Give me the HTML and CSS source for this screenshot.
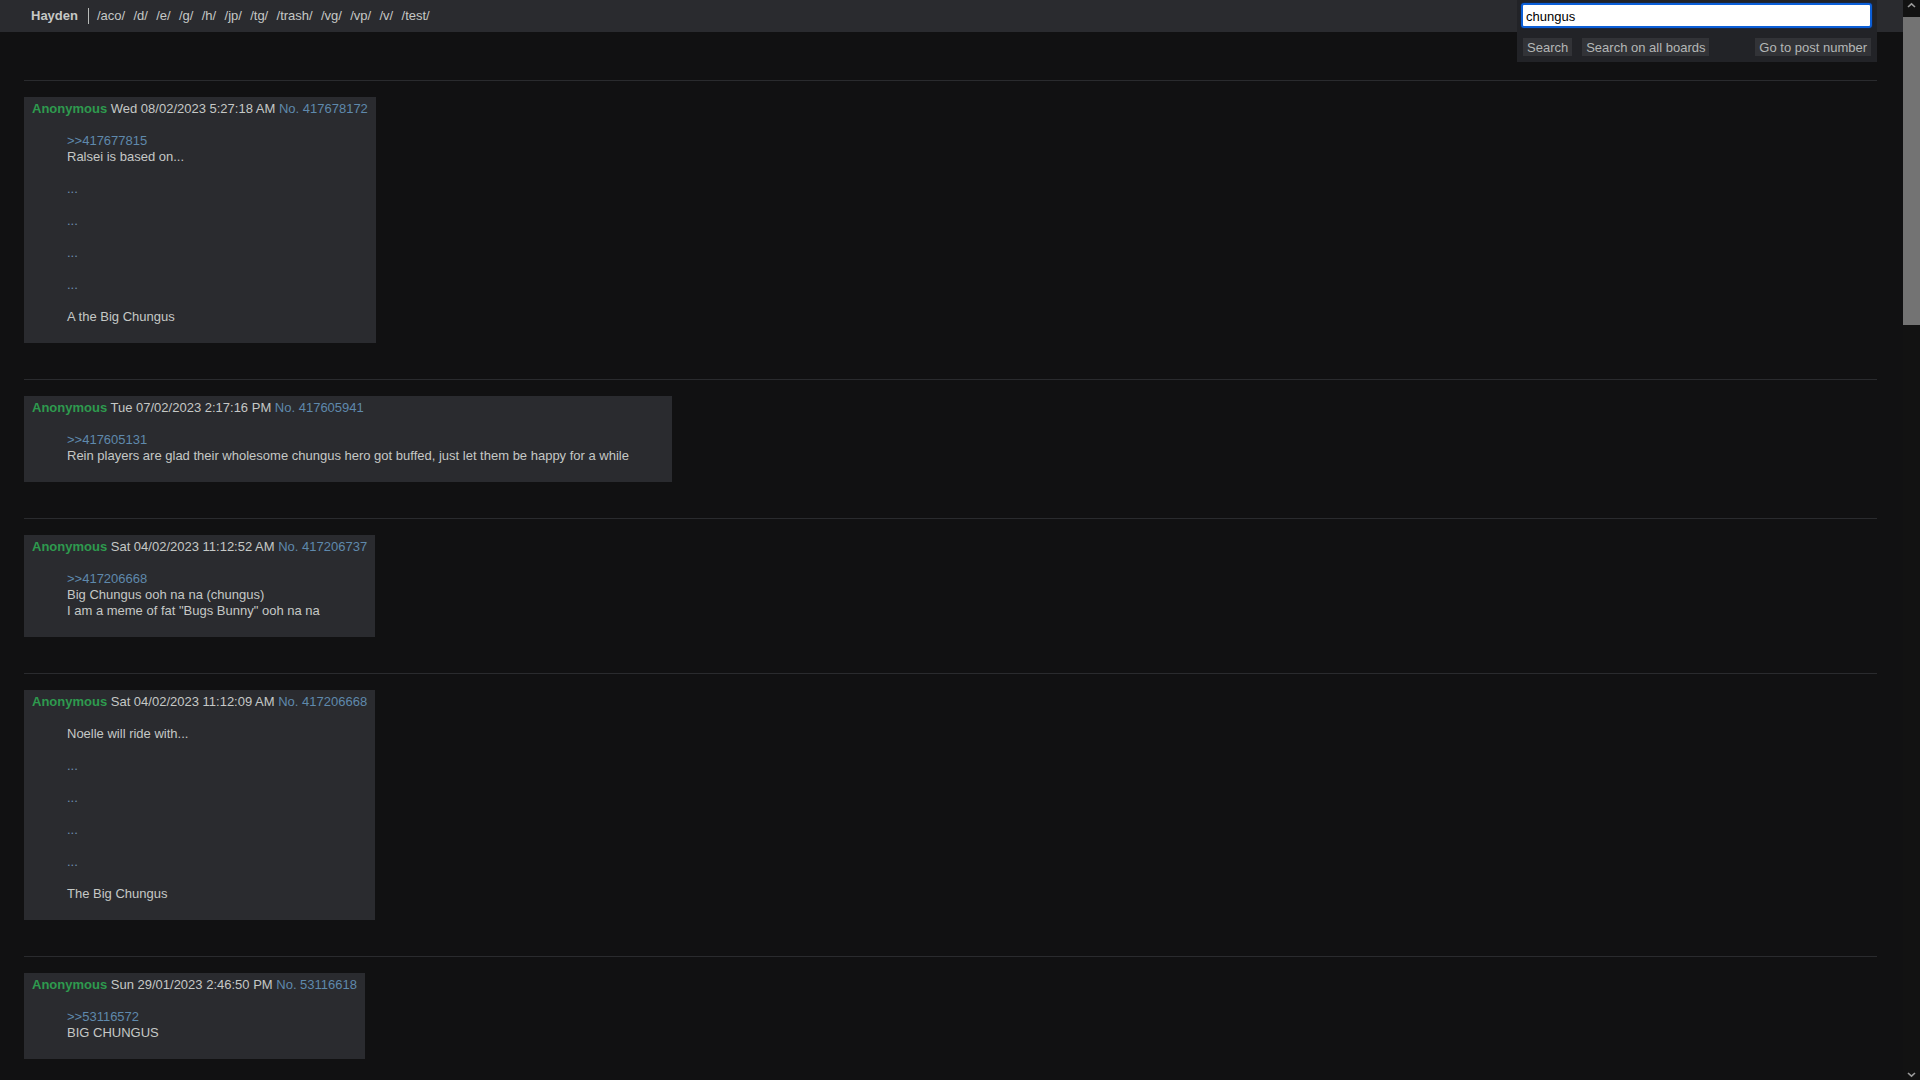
FILE: index.html
```html
<!DOCTYPE html>
<html lang="en">
<head>
<meta charset="utf-8">
<title>Search: chungus</title>
<link rel="stylesheet" href="styles.css">
</head>
<body>
<nav class="navbar">
  <span class="brand">Hayden</span>
  <span class="sep"></span>
  <div class="boards">
    <a href="#">/aco/</a><a href="#">/d/</a><a href="#">/e/</a><a href="#">/g/</a><a href="#">/h/</a><a href="#">/jp/</a><a href="#">/tg/</a><a href="#">/trash/</a><a href="#">/vg/</a><a href="#">/vp/</a><a href="#">/v/</a><a href="#">/test/</a>
  </div>
</nav>

<div class="search-panel">
  <input class="search-input" type="text" value="chungus">
  <div class="search-buttons">
    <button class="btn">Search</button>
    <button class="btn">Search on all boards</button>
    <button class="btn btn-right">Go to post number</button>
  </div>
</div>

<main class="results">
  <div class="result">
    <div class="post">
      <div class="post-info"><span class="name">Anonymous</span> <span class="date">Wed 08/02/2023 5:27:18 AM</span> <a class="post-no" href="#">No. 417678172</a></div>
      <blockquote class="post-body"><a class="quotelink" href="#">&gt;&gt;417677815</a><br>Ralsei is based on...<br><br><span class="dots">...</span><br><br><span class="dots">...</span><br><br><span class="dots">...</span><br><br><span class="dots">...</span><br><br>A the Big Chungus</blockquote>
    </div>
  </div>

  <div class="result">
    <div class="post">
      <div class="post-info"><span class="name">Anonymous</span> <span class="date">Tue 07/02/2023 2:17:16 PM</span> <a class="post-no" href="#">No. 417605941</a></div>
      <blockquote class="post-body"><a class="quotelink" href="#">&gt;&gt;417605131</a><br>Rein players are glad their wholesome chungus hero got buffed, just let them be happy for a while</blockquote>
    </div>
  </div>

  <div class="result">
    <div class="post">
      <div class="post-info"><span class="name">Anonymous</span> <span class="date">Sat 04/02/2023 11:12:52 AM</span> <a class="post-no" href="#">No. 417206737</a></div>
      <blockquote class="post-body"><a class="quotelink" href="#">&gt;&gt;417206668</a><br>Big Chungus ooh na na (chungus)<br>I am a meme of fat "Bugs Bunny" ooh na na</blockquote>
    </div>
  </div>

  <div class="result">
    <div class="post">
      <div class="post-info"><span class="name">Anonymous</span> <span class="date">Sat 04/02/2023 11:12:09 AM</span> <a class="post-no" href="#">No. 417206668</a></div>
      <blockquote class="post-body">Noelle will ride with...<br><br><span class="dots">...</span><br><br><span class="dots">...</span><br><br><span class="dots">...</span><br><br><span class="dots">...</span><br><br>The Big Chungus</blockquote>
    </div>
  </div>

  <div class="result">
    <div class="post">
      <div class="post-info"><span class="name">Anonymous</span> <span class="date">Sun 29/01/2023 2:46:50 PM</span> <a class="post-no" href="#">No. 53116618</a></div>
      <blockquote class="post-body"><a class="quotelink" href="#">&gt;&gt;53116572</a><br>BIG CHUNGUS</blockquote>
    </div>
  </div>
</main>

<div class="scrollbar" aria-hidden="true">
  <div class="sb-button">
    <svg width="17" height="17" viewBox="0 0 17 17"><path d="M5 7 L8.5 3.8 L12 7" fill="none" stroke="#9a9a9a" stroke-width="1.6"/></svg>
  </div>
  <div class="sb-track">
    <div class="sb-thumb"></div>
  </div>
  <div class="sb-button">
    <svg width="17" height="17" viewBox="0 0 17 17"><path d="M5 10 L8.5 13.2 L12 10" fill="none" stroke="#9a9a9a" stroke-width="1.6"/></svg>
  </div>
</div>
</body>
</html>
```

FILE: styles.css
```css
html {
  background: #111112;
}

body {
  margin: 0 17px 0 0;
  min-height: 3668px;
  background: #111112;
  color: #c5c8c6;
  font-family: "Liberation Sans", Arial, sans-serif;
  font-size: 13px;
  line-height: 16px;
}

a {
  text-decoration: none;
}

/* ---------- navbar ---------- */
.navbar {
  display: flex;
  align-items: center;
  height: 32px;
  padding-left: 31px;
  background: #2a2b2f;
}

.brand {
  font-weight: bold;
  color: #c5c8c6;
}

.sep {
  width: 1px;
  height: 16px;
  background: #b8bbb9;
  margin: 0 8px 0 10px;
}

.boards {
  display: flex;
  gap: 8.3px;
}

.boards a {
  color: #c5c8c6;
}

/* ---------- search dropdown ---------- */
.search-panel {
  position: absolute;
  top: 0;
  right: 43px;
  width: 360px;
  height: 62px;
  box-sizing: border-box;
  padding: 3px 5px 0 4px;
  background: #222327;
  display: flex;
  flex-direction: column;
}

.search-input {
  box-sizing: border-box;
  width: 351px;
  height: 25px;
  margin: 0;
  padding: 1px 3px 0;
  border: 2px solid #0b5fd8;
  border-radius: 3px;
  outline: none;
  box-shadow: 0 0 0 1px #1b2740;
  background: #ffffff;
  color: #000000;
  font-family: "Liberation Sans", Arial, sans-serif;
  font-size: 13px;
}

.search-buttons {
  display: flex;
  gap: 10px;
  margin-top: 10px;
  padding-left: 2px;
}

.btn {
  height: 18px;
  margin: 0;
  padding: 1px 4px 0;
  border: none;
  border-radius: 0;
  background: #323337;
  color: #b4b7b6;
  font-family: "Liberation Sans", Arial, sans-serif;
  font-size: 13px;
  line-height: 17px;
}

.btn-right {
  margin-left: auto;
  margin-right: 1px;
}

/* ---------- results ---------- */
.results {
  padding-top: 48px;
}

.result {
  margin: 0 26px 0 24px;
  padding: 16px 0 36px;
  border-top: 1px solid #2a2b2e;
}

.post {
  width: fit-content;
  background: #2a2b2f;
  padding: 4px 0 18px;
}

.post-info {
  padding: 0 8px;
  white-space: nowrap;
}

.name {
  color: #2e9a4e;
  font-weight: bold;
}

.date {
  color: #c5c8c6;
}

.post-no {
  color: #5f89ac;
}

.post-body {
  margin: 16px 43px 0 43px;
  white-space: nowrap;
}

.quotelink {
  color: #5f89ac;
}

.dots {
  color: #6f8fb0;
}

/* ---------- emulated window scrollbar ---------- */
.scrollbar {
  position: fixed;
  top: 0;
  right: 0;
  width: 17px;
  height: 100vh;
  background: #121212;
  display: flex;
  flex-direction: column;
}

.sb-button {
  height: 17px;
  flex: none;
}

.sb-button svg {
  display: block;
}

.sb-track {
  flex: 1;
}

.sb-thumb {
  height: 308px;
  background: #737373;
}
```
